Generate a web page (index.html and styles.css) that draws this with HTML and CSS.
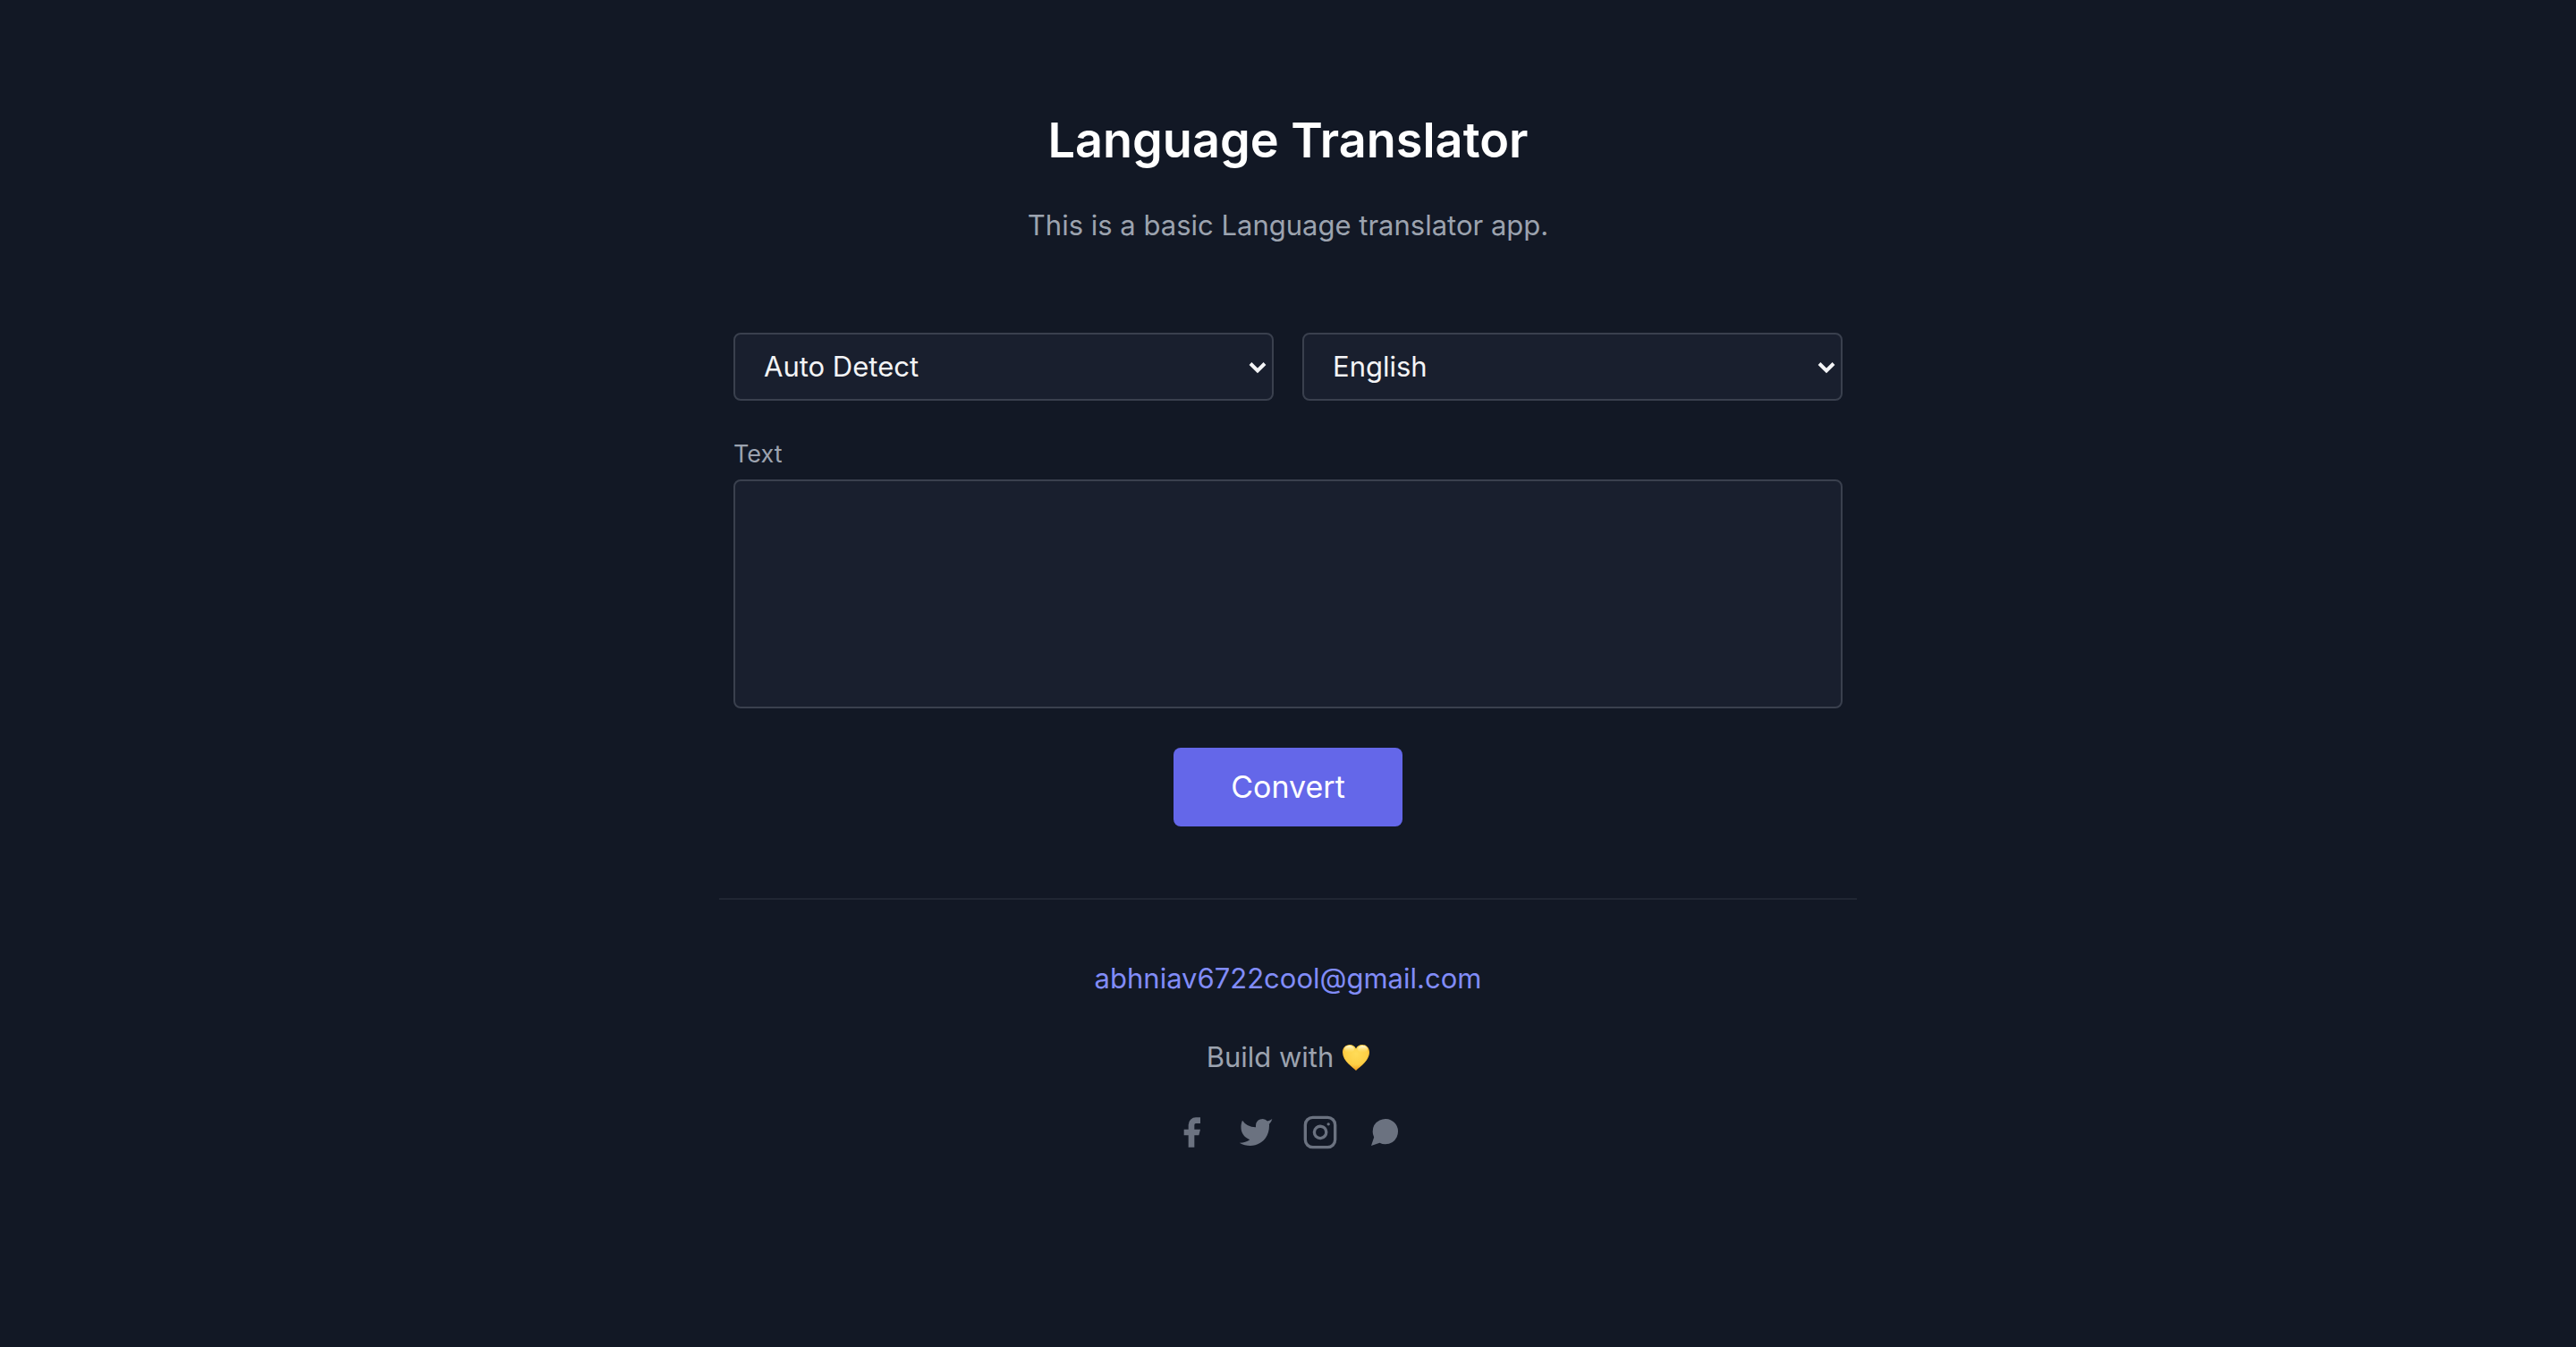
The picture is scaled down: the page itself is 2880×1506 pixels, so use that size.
FILE: index.html
```html
<!DOCTYPE html>
<html lang="en">
<head>
  <meta charset="utf-8">
  <meta name="viewport" content="width=device-width, initial-scale=1">
  <title>Language Translator</title>
  <link rel="stylesheet" href="styles.css">
</head>
<body>
  <main class="page">
    <header class="intro">
      <h1 class="title">Language Translator</h1>
      <p class="lead">This is a basic Language translator app.</p>
    </header>

    <form class="translator">
      <div class="languages">
        <div class="picker">
          <select class="field picker-select" name="from" aria-label="Translate from">
            <option selected>Auto Detect</option>
            <option>English</option>
          </select>
          <svg class="picker-arrow" viewBox="0 0 20 14" aria-hidden="true"><path d="M2 2.500l8 8 8-8"/></svg>
        </div>
        <div class="picker">
          <select class="field picker-select" name="to" aria-label="Translate to">
            <option selected>English</option>
          </select>
          <svg class="picker-arrow" viewBox="0 0 20 14" aria-hidden="true"><path d="M2 2.500l8 8 8-8"/></svg>
        </div>
      </div>
      <label class="label" for="text">Text</label>
      <textarea class="field textarea" id="text" name="text"></textarea>
      <button class="convert" type="button">Convert</button>
    </form>

    <footer class="footer">
      <a class="email" href="mailto:abhniav6722cool@gmail.com">abhniav6722cool@gmail.com</a>
      <p class="credit">Build with
        <svg class="heart" viewBox="0 0 30 29" role="img" aria-label="love">
          <defs>
            <radialGradient id="heart-fill" cx=".5" cy=".35" r=".65">
              <stop offset="0" stop-color="#ffdc58"/>
              <stop offset=".65" stop-color="#fdcf45"/>
              <stop offset="1" stop-color="#f09a1c"/>
            </radialGradient>
            <linearGradient id="heart-shine" x1="0" y1="0" x2="0" y2="1">
              <stop offset="0" stop-color="#fffbe0"/>
              <stop offset="1" stop-color="#ffe272" stop-opacity="0"/>
            </linearGradient>
          </defs>
          <path fill="url(#heart-fill)" d="M15 29C12 25.500 0 18.500 0 8.500 0 3.500 3.500 0 8 0c3.200 0 5.800 1.700 7 4.500C16.200 1.700 18.800 0 22 0c4.500 0 8 3.500 8 8.500C30 18.500 18 25.500 15 29z"/>
          <ellipse fill="url(#heart-shine)" cx="7.500" cy="5" rx="5.500" ry="4"/>
          <ellipse fill="url(#heart-shine)" cx="22.500" cy="5" rx="5.500" ry="4"/>
        </svg>
      </p>
      <nav class="social" aria-label="Social links">
        <a class="social-link" href="#" aria-label="Facebook">
          <svg class="icon" viewBox="0 0 24 24"><path d="M18 2h-3a5 5 0 00-5 5v3H7v4h3v8h4v-8h3l1-4h-4V7a1 1 0 011-1h3z"/></svg>
        </a>
        <a class="social-link" href="#" aria-label="Twitter">
          <svg class="icon" viewBox="0 0 24 24"><path d="M23 3a10.900 10.900 0 01-3.140 1.530 4.480 4.480 0 00-7.860 3v1A10.660 10.660 0 013 4s-4 9 5 13a11.640 11.640 0 01-7 2c9 5 20 0 20-11.500a4.500 4.500 0 00-.08-.83A7.720 7.720 0 0023 3z"/></svg>
        </a>
        <a class="social-link" href="#" aria-label="Instagram">
          <svg class="icon icon-outline" viewBox="0 0 24 24"><rect width="20" height="20" x="2" y="2" rx="5" ry="5"/><path d="M16 11.370A4 4 0 1112.630 8 4 4 0 0116 11.370zm1.500-4.870h.01"/></svg>
        </a>
        <a class="social-link" href="#" aria-label="Chat">
          <svg class="icon" viewBox="0 0 24 24"><path d="M21 11.500a8.380 8.380 0 01-.9 3.800 8.500 8.500 0 01-7.600 4.700 8.380 8.380 0 01-3.800-.9L3 21l1.900-5.700a8.380 8.380 0 01-.9-3.800 8.500 8.500 0 014.700-7.600 8.380 8.380 0 013.800-.9h.5a8.480 8.480 0 018 8v.5z"/></svg>
        </a>
      </nav>
    </footer>
  </main>
</body>
</html>
```

FILE: styles.css
```css
*,
*::before,
*::after {
  box-sizing: border-box;
}

body {
  margin: 0;
  min-height: 100vh;
  background: #121825;
  color: #9ca3af;
  font-family: Inter, "Liberation Sans", sans-serif;
  font-size: 31px;
  line-height: 48px;
}

.page {
  width: 100%;
  max-width: 1272px;
  margin: 0 auto;
  padding: 120px 0;
}

.intro {
  padding: 0 16px;
  text-align: center;
}

.title {
  margin: 0 0 32px;
  color: #fff;
  font-size: 54px;
  font-weight: 600;
  line-height: 74px;
}

.lead {
  margin: 0 0 94px;
  line-height: 52px;
}

.translator {
  display: flex;
  flex-direction: column;
  padding: 0 16px 80px;
}

.languages {
  display: grid;
  grid-template-columns: 1fr 1fr;
  gap: 32px;
  margin-bottom: 32px;
}

.picker {
  position: relative;
}

.field {
  display: block;
  width: 100%;
  border: 2px solid #3a404e;
  border-radius: 8px;
  background: #191f2e;
  color: #f3f4f6;
  font: inherit;
  outline: none;
}

.picker-select {
  height: 76px;
  padding: 0 48px 0 32px;
  appearance: none;
}

.picker-arrow {
  position: absolute;
  top: 32px;
  right: 8px;
  width: 20px;
  height: 14px;
  fill: none;
  stroke: #f3f4f6;
  stroke-width: 4;
  pointer-events: none;
}

.label {
  font-size: 27px;
  line-height: 56px;
}

.textarea {
  height: 256px;
  padding: 8px 24px;
  resize: none;
}

.convert {
  align-self: center;
  margin-top: 44px;
  padding: 16px 64px;
  border: 0;
  border-radius: 8px;
  background: #6467e9;
  color: #fff;
  font-family: inherit;
  font-size: 34px;
  line-height: 56px;
}

.footer {
  display: flex;
  flex-direction: column;
  align-items: center;
  gap: 40px;
  padding-top: 64px;
  border-top: 2px solid #202633;
}

.email {
  color: #818cf8;
  text-decoration: none;
}

.credit {
  display: flex;
  align-items: center;
  gap: 10px;
  margin: 0;
}

.heart {
  width: 30px;
  height: 29px;
}

.social {
  display: flex;
  gap: 32px;
}

.social-link {
  display: block;
  color: #6b7280;
}

.icon {
  display: block;
  width: 40px;
  height: 40px;
  fill: currentColor;
}

.icon-outline {
  fill: none;
  stroke: currentColor;
  stroke-width: 2;
  stroke-linecap: round;
  stroke-linejoin: round;
}
```
